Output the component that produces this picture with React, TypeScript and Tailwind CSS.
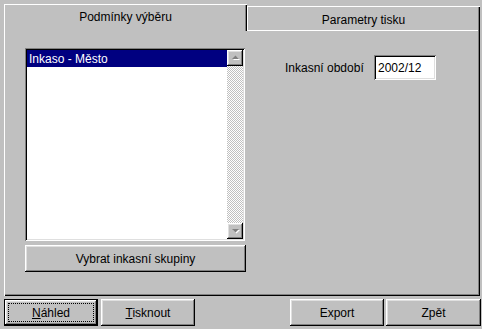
import { FC, ReactNode } from "react";

const raised =
  "shadow-[inset_-1px_-1px_0_#000,inset_1px_1px_0_#fff,inset_-2px_-2px_0_#808080,inset_2px_2px_0_#dfdfdf]";
const sunken =
  "shadow-[inset_1px_1px_0_#808080,inset_-1px_-1px_0_#fff,inset_2px_2px_0_#000,inset_-2px_-2px_0_#dfdfdf]";

interface BtnProps {
  children: ReactNode;
  className?: string;
  isDefault?: boolean;
}

const WinButton: FC<BtnProps> = ({ children, className = "", isDefault }) => {
  if (isDefault) {
    return (
      <div className={`h-[27px] border border-black bg-[#c0c0c0] ${className}`}>
        <div className={`h-full w-full p-[3px] ${raised}`}>
          <div className="flex h-full w-full items-center justify-center border border-dotted border-black">
            {children}
          </div>
        </div>
      </div>
    );
  }
  return (
    <div
      className={`flex h-[27px] items-center justify-center bg-[#c0c0c0] ${raised} ${className}`}
    >
      {children}
    </div>
  );
};

const ScrollArrow: FC<{ down?: boolean }> = ({ down }) => (
  <div className={`flex h-[16px] w-[16px] items-center justify-center bg-[#c0c0c0] ${raised}`}>
    <svg width="9" height="6" viewBox="0 0 9 6">
      {down ? (
        <>
          <polygon points="2,2 9,2 5.5,5.5" fill="#fff" />
          <polygon points="1,1 8,1 4.5,4.5" fill="#808080" />
        </>
      ) : (
        <>
          <polygon points="2,5 9,5 5.5,1.5" fill="#fff" />
          <polygon points="1,4 8,4 4.5,0.5" fill="#808080" />
        </>
      )}
    </svg>
  </div>
);

export default function App() {
  return (
    <div
      className="h-[329px] w-[482px] overflow-hidden bg-[#c0c0c0] pl-[4px] pt-[4px] text-[12px] leading-none text-black"
      style={{ fontFamily: '"Liberation Sans", Arial, sans-serif' }}
    >
      {/* tabs */}
      <div className="flex h-[27px] w-[476px] items-end">
        <div className="flex h-[27px] w-[243px] items-center justify-center pb-[1px] shadow-[inset_1px_1px_0_#fff,inset_-1px_0_0_#000,inset_-2px_0_0_#808080]">
          Podmínky výběru
        </div>
        <div className="flex h-[25px] flex-1 items-center justify-center pt-[2px] shadow-[inset_1px_1px_0_#fff,inset_-1px_0_0_#000,inset_-2px_0_0_#808080,inset_0_-1px_0_#fff]">
          Parametry tisku
        </div>
      </div>

      {/* panel */}
      <div className="flex h-[265px] w-[476px] pl-[21px] pt-[17px] shadow-[inset_1px_0_0_#fff,inset_-1px_-1px_0_#000,inset_-2px_-2px_0_#808080]">
        <div className="flex w-[220px] flex-col gap-[4px]">
          <div className={`flex h-[193px] bg-white p-[2px] ${sunken}`}>
            <div className="flex-1">
              <div className="flex h-[17px] items-center bg-[#000080] pl-[2px] text-white">
                Inkaso - Město
              </div>
            </div>
            <div className="flex w-[16px] flex-col bg-[repeating-conic-gradient(#c0c0c0_0_25%,#fff_0_50%)] bg-[length:2px_2px]">
              <ScrollArrow />
              <div className="flex-1" />
              <ScrollArrow down />
            </div>
          </div>
          <WinButton className="w-[221px]">Vybrat inkasní skupiny</WinButton>
        </div>

        <div className="flex flex-1 items-start pl-[40px] pt-[7px]">
          <div className="flex items-center">
            <span className="w-[89px]">Inkasní období</span>
            <div className={`flex h-[25px] w-[62px] items-center bg-white pl-[4px] ${sunken}`}>
              2002/12
            </div>
          </div>
        </div>
      </div>

      {/* bottom buttons */}
      <div className="mt-[3px] flex w-[477px]">
        <WinButton isDefault className="w-[94px]">
          <span>
            <span className="underline">N</span>áhled
          </span>
        </WinButton>
        <WinButton className="ml-[3px] w-[94px]">
          <span>
            <span className="underline">T</span>isknout
          </span>
        </WinButton>
        <div className="flex-1" />
        <WinButton className="w-[94px]">Export</WinButton>
        <WinButton className="ml-[2px] w-[95px]">Zpět</WinButton>
      </div>
    </div>
  );
}
